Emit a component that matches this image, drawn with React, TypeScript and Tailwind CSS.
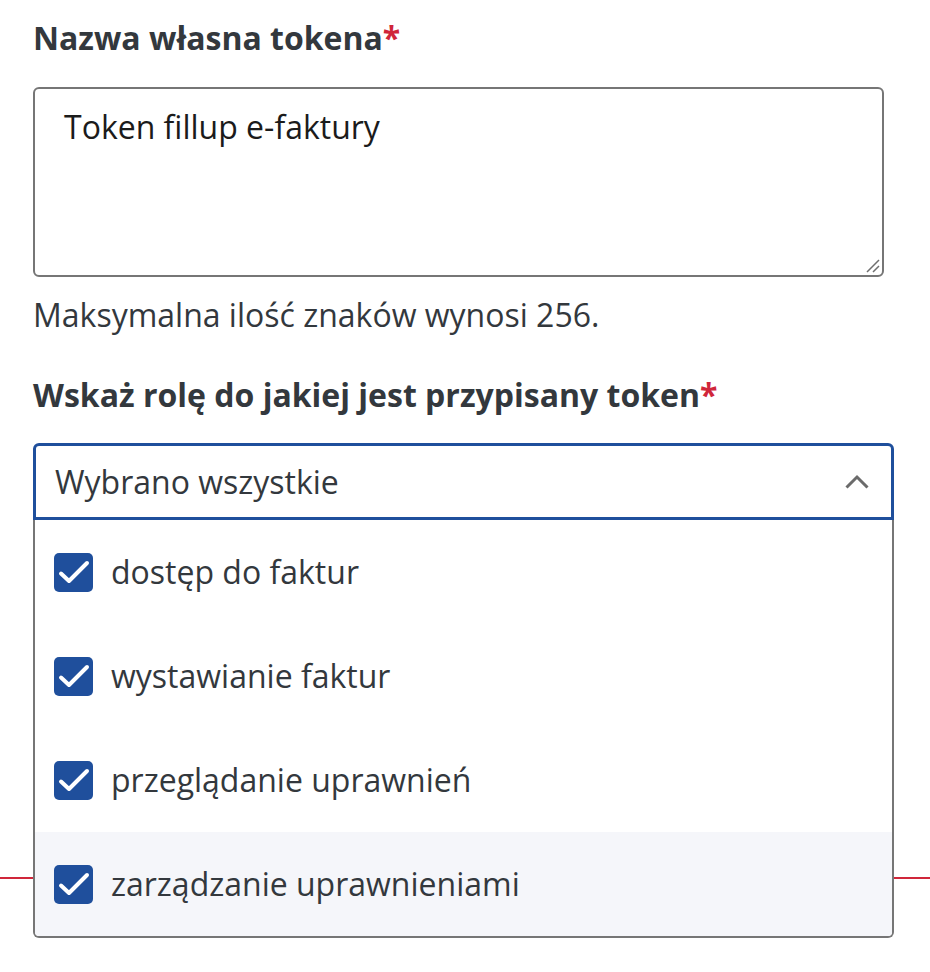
import React from "react";

const items = [
  "dostęp do faktur",
  "wystawianie faktur",
  "przeglądanie uprawnień",
  "zarządzanie uprawnieniami",
];

function Check() {
  return (
    <span className="flex h-[39px] w-[39px] shrink-0 items-center justify-center rounded-[5px] bg-[#1f4f9c]">
      <svg width="39" height="39" viewBox="0 0 39 39" fill="none">
        <path d="M7 20.5l8 7.5L33 10" stroke="white" strokeWidth="4" strokeLinecap="round" strokeLinejoin="round" />
      </svg>
    </span>
  );
}

export default function App() {
  return (
    <div className="relative h-[972px] w-[930px] overflow-hidden bg-white font-['Open_Sans',sans-serif] text-[#33383d]">
      <div className="pl-[33px] pt-[18px]">
        <div className="text-[32px] font-bold leading-[40px]">
          Nazwa własna tokena<span className="text-[#d0263a]">*</span>
        </div>
        <div className="relative mt-[29px] w-[851px]">
          <textarea
            readOnly
            defaultValue="Token fillup e-faktury"
            className="block h-[190px] w-[851px] resize-none rounded-[6px] border-2 border-[#767676] px-[29px] py-[18px] text-[32px] leading-[40px] text-[#1b1b1b] outline-none"
          />
          <svg className="absolute bottom-[3px] right-[3px]" width="16" height="16" viewBox="0 0 16 16" fill="none">
            <path d="M2 14L14 2M8 14l6-6" stroke="#6f6f6f" strokeWidth="1.5" />
          </svg>
        </div>
        <div className="mt-[18px] text-[32px] leading-[40px]">Maksymalna ilość znaków wynosi 256.</div>
        <div className="mt-[40px] text-[32px] font-bold leading-[40px]">
          Wskaż rolę do jakiej jest przypisany token<span className="text-[#d0263a]">*</span>
        </div>
        <div className="relative mt-[28px] w-[861px]">
          <div className="flex h-[77px] items-center justify-between rounded-t-[6px] border-[3px] border-[#1f4f9c] pl-[19px] pr-[22px] text-[32px]">
            <span>Wybrano wszystkie</span>
            <svg width="24" height="15" viewBox="0 0 24 15" fill="none">
              <path d="M1.5 13.5L12 3l10.5 10.5" stroke="#6b6b6b" strokeWidth="3" />
            </svg>
          </div>
          <div className="absolute left-0 right-0 top-[77px] z-10 flex flex-col overflow-hidden rounded-b-[6px] border-2 border-t-0 border-[#767676] bg-white">
            {items.map((it, i) => (
              <div
                key={it}
                className={`flex h-[104px] items-center gap-[18px] pl-[19px] text-[32px] ${i === 3 ? "bg-[#f5f6fa]" : ""}`}
              >
                <Check />
                <span>{it}</span>
              </div>
            ))}
          </div>
        </div>
      </div>
      <div className="mt-[357px] h-[2px] w-full bg-[#d0263a]" />
    </div>
  );
}
